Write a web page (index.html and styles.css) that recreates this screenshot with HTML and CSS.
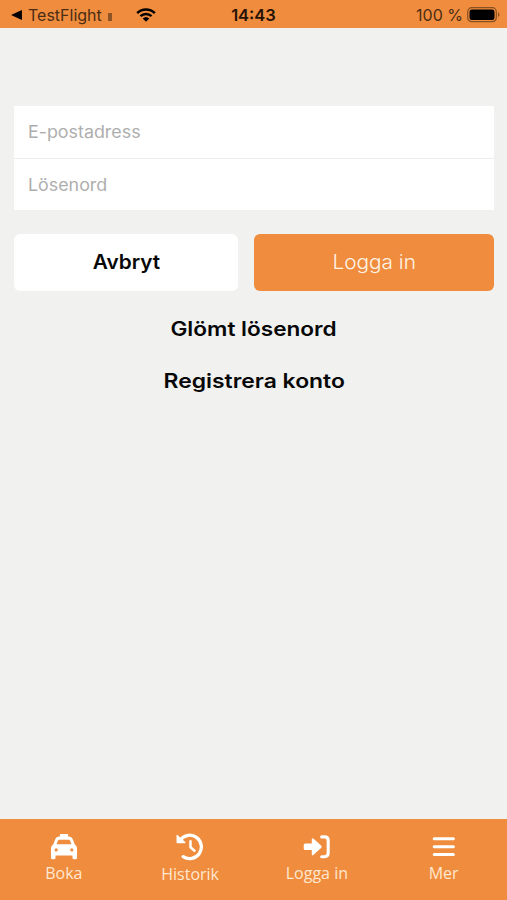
FILE: index.html
```html
<!DOCTYPE html>
<html lang="sv">
<head>
<meta charset="utf-8">
<title>Logga in</title>
<link rel="stylesheet" href="styles.css">
</head>
<body>
<header class="status">
  <div class="status-left">
    <svg class="back" width="11" height="10" viewBox="0 0 12 11"><path d="M0 5.5 12 0V11Z"/></svg>
    <span class="carrier">TestFlight</span>
    <i class="signal"></i>
    <svg class="wifi" width="20" height="14" viewBox="0 0 20 14"><path d="M1.2 5.1a12.6 12.6 0 0 1 17.6 0M4.5 8.2a8 8 0 0 1 11 0" fill="none" stroke="#000" stroke-width="2.5"/><path d="M6.7 10.5a4.8 4.8 0 0 1 6.6 0L10 13.8Z"/></svg>
  </div>
  <time class="clock">14:43</time>
  <div class="status-right">
    <span class="percent">100 %</span>
    <svg width="33" height="16" viewBox="0 0 33 16"><rect x=".7" y=".7" width="28.6" height="14" rx="4" fill="none" stroke="#865020" stroke-width="1.2"/><rect x="2.5" y="2.4" width="25" height="10.6" rx="2.3"/><path d="M31 5.3q3 2.4 0 4.8Z" fill="#865020"/></svg>
  </div>
</header>
<main class="content">
  <form class="login">
    <div class="fields">
      <label class="field"><span class="email">E-postadress</span></label>
      <label class="field"><span class="password">Lösenord</span></label>
    </div>
    <div class="actions">
      <button type="button" class="button cancel"><span>Avbryt</span></button>
      <button type="button" class="button submit"><span>Logga in</span></button>
    </div>
  </form>
  <a class="link forgot">Glömt lösenord</a>
  <a class="link register">Registrera konto</a>
</main>
<nav class="tabs">
  <a class="tab taxi">
    <svg width="26" height="26" viewBox="0 0 26 26"><path fill-rule="evenodd" d="M8.8 2.6V1.4Q8.8 0 10.2 0h5.6q1.4 0 1.4 1.4v1.2h.8q2.800 0 3.800 2.600l2 5.400Q26 11.700 26 14v9.700q0 1.600-1.600 1.600h-1.300q-1.600 0-1.600-1.600v-2.200h-17v2.200q0 1.600-1.600 1.600H1.600Q0 25.300 0 23.700V14q0-2.300 2.200-3.400l2-5.400Q5.200 2.600 8 2.600ZM5.600 10.300h14.800l-1.300-3.500q-.4-1-1.500-1H8.400q-1.100 0-1.500 1ZM5.200 17.500a1.600 1.600 0 1 0 0-3.200 1.600 1.600 0 0 0 0 3.200Zm15.600 0a1.600 1.600 0 1 0 0-3.200 1.600 1.600 0 0 0 0 3.200Z"/></svg>
    <span>Boka</span>
  </a>
  <a class="tab history">
    <svg width="28" height="28" viewBox="0 0 28 28"><g fill="none" stroke="#fff" stroke-linecap="round" stroke-linejoin="round"><path d="M4.600 6.500A11.700 11.700 0 1 1 7.200 23.700" stroke-width="3.300"/><path d="M14.500 8.200v6.100l4 3.400" stroke-width="2.500"/></g><path d="M.5 2.600q0-1.500 1.200-.4l7.500 6.900q1 1.100-.5 1.100H1.600Q.5 10.200.5 9Z"/></svg>
    <span>Historik</span>
  </a>
  <a class="tab">
    <svg width="27" height="26" viewBox="0 0 27 26"><path d="M2.300 9.500H8.800V5.600q0-2.300 1.800-.8l7.500 6.700q1.300 1.300 0 2.600l-7.500 6.700q-1.800 1.500-1.800-.8v-3.900H2.300Q.7 16.100.7 14.500v-3.400q0-1.600 1.600-1.600Z"/><path d="M18.700 2.900h2.900q3.600 0 3.600 3.600v12.600q0 3.600-3.600 3.600h-2.900" fill="none" stroke="#fff" stroke-width="3.100" stroke-linecap="round"/></svg>
    <span>Logga in</span>
  </a>
  <a class="tab">
    <svg width="24" height="26" viewBox="0 0 24 26"><path d="M2.200 4.700h19.200M2.200 12.700h19.200M2.200 20.400h19.200" fill="none" stroke="#fff" stroke-width="3" stroke-linecap="round"/></svg>
    <span>Mer</span>
  </a>
</nav>
</body>
</html>
```
FILE: styles.css
```css
* { box-sizing: border-box; }
body {
  margin: 0;
  height: 900px;
  display: flex;
  flex-direction: column;
  overflow: hidden;
  background: #f1f1ef;
  color: #080808;
  font-family: Inter, "Liberation Sans", sans-serif;
}
svg { display: block; flex: none; }
span, time { white-space: nowrap; }
.status {
  height: 28px;
  flex: none;
  display: grid;
  grid-template-columns: 1fr auto 1fr;
  align-items: center;
  padding: 2px 8px 0 11px;
  background: #f08c3d;
}
.status-left, .status-right { display: flex; align-items: center; }
.status-right { justify-content: flex-end; gap: 4px; margin-right: -1px; }
.back { margin-right: 6px; }
.carrier, .percent { font-size: 16px; line-height: 20px; color: #4b2d14; }
.signal { width: 4px; height: 8px; margin: 4px 24px 0 6px; background: #8f5426; }
.clock { font-size: 16.5px; line-height: 20px; font-weight: 600; color: #261305; transform: translateX(-1.5px); }
.content {
  flex: 1;
  display: flex;
  flex-direction: column;
  align-items: center;
  padding: 78px 13px 0 14px;
}
.login { width: 100%; }
.fields { background: #fff; height: 104px; }
.field { height: 52px; display: flex; align-items: center; padding-left: 14px; font-size: 17px; color: #aeaeae; }
.field + .field { border-top: 1px solid #ededed; }
.field span { transform-origin: left; transform: scaleX(1.05); }
.actions { display: grid; grid-template-columns: 224px 240px; gap: 16px; margin-top: 24px; }
.button { height: 57px; border: 0; border-radius: 6px; padding: 0 0 2px; font: 600 20px/24px Inter, sans-serif; }
.button span { display: inline-block; transform: scaleX(1.04); }
.cancel { background: #fff; color: #080808; }
.submit { background: #f08c3d; color: #fff4e5; font-weight: 300; }
.link { font-size: 20px; line-height: 24px; font-weight: 600; white-space: nowrap; }
.forgot { margin-top: 26px; transform: scaleX(1.13); }
.register { margin-top: 28px; transform: scaleX(1.145); }
.tabs {
  height: 81px;
  flex: none;
  display: grid;
  grid-template-columns: repeat(4, 1fr);
  padding-top: 15px;
  background: #f08c3d;
  color: #ffe8d0;
}
.tab { display: flex; flex-direction: column; align-items: center; font: 400 16px/22px "Open Sans", sans-serif; }
.tab svg { fill: #fff; margin-bottom: 2px; }
.taxi { padding-left: 1px; }
.history { margin-top: -1px; }
```
